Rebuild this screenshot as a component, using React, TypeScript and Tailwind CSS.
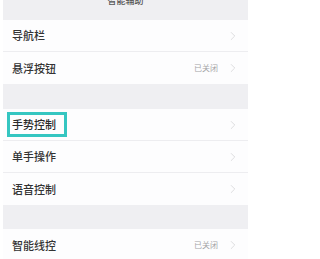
import { ChevronRight } from "lucide-react";

type Row = { label: string; value?: string; highlight?: boolean };

function SettingRow({ label, value, highlight, last }: Row & { last?: boolean }) {
  return (
    <div
      className={`flex h-[32px] items-center justify-between bg-[#fdfdfe] pl-[9px] pr-[8px] ${
        last ? "" : "border-b border-[#ededf0]"
      }`}
    >
      {highlight ? (
        <span className="-ml-[5px] flex h-[25px] w-[60px] items-center border-[3px] border-[#35c6c1] pl-[2px] text-[11px] font-medium text-[#2a2a2a]">
          {label}
        </span>
      ) : (
        <span className="text-[11px] font-medium text-[#333333]">{label}</span>
      )}
      <span className="flex items-center gap-[8px]">
        {value && <span className="text-[8px] text-[#a5a5a8]">{value}</span>}
        <ChevronRight className="h-[14px] w-[14px] text-[#d3d3d6]" strokeWidth={1.3} />
      </span>
    </div>
  );
}

export default function App() {
  return (
    <main
      className="h-[259px] w-[251px] overflow-hidden bg-white px-[3px]"
      style={{ fontFamily: '"Noto Sans CJK SC", "Noto Sans", sans-serif' }}
    >
      <div className="flex h-[20px] items-start justify-center bg-[#efeff2]">
        <span className="-mt-[5px] text-[9px] font-medium leading-[12px] text-[#555]">智能辅助</span>
      </div>
      <SettingRow label="导航栏" />
      <SettingRow label="悬浮按钮" value="已关闭" last />
      <div className="h-[25px] bg-[#efeff2]" />
      <SettingRow label="手势控制" highlight />
      <SettingRow label="单手操作" />
      <SettingRow label="语音控制" last />
      <div className="h-[24px] bg-[#efeff2]" />
      <SettingRow label="智能线控" value="已关闭" last />
    </main>
  );
}
